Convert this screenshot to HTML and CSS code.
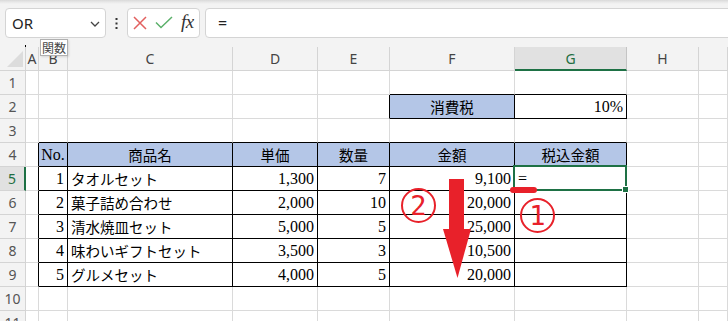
FILE: index.html
```html
<!DOCTYPE html>
<html lang="ja">
<head>
<meta charset="utf-8">
<title>Excel</title>
<link rel="stylesheet" href="styles.css">
</head>
<body>
<div class="app">
  <div class="fbar">
    <div class="namebox">
      <span class="name">OR</span>
      <svg class="chev" width="10" height="6" viewBox="0 0 10 6"><polyline points="1,1 5,5 9,1" fill="none" stroke="#444" stroke-width="1.3"/></svg>
    </div>
    <div class="more">
      <svg width="3" height="11" viewBox="0 0 3 11"><rect x="0.5" y="0" width="2" height="2" fill="#333"/><rect x="0.5" y="4.5" width="2" height="2" fill="#333"/><rect x="0.5" y="9" width="2" height="2" fill="#333"/></svg>
    </div>
    <div class="btns">
      <svg class="cancel" width="14" height="14" viewBox="0 0 14 14"><path d="M1 1 L13 13 M13 1 L1 13" stroke="#e2605f" stroke-width="1.5" fill="none"/></svg>
      <svg class="ok" width="18" height="13" viewBox="0 0 18 13"><polyline points="1,6.5 6,11.5 17,1" stroke="#5bb06a" stroke-width="1.5" fill="none"/></svg>
      <span class="fx">fx</span>
    </div>
    <div class="formula">=</div>
  </div>

  <div class="sheet">
    <div class="row hdr">
      <div class="c corner"><span class="tri"></span></div>
      <div class="c">A</div><div class="c">B</div><div class="c">C</div><div class="c">D</div><div class="c">E</div><div class="c">F</div><div class="c selc">G</div><div class="c">H</div><div class="c"></div>
    </div>
    <div class="row">
      <div class="c rh">1</div>
      <div class="c"></div><div class="c"></div><div class="c"></div><div class="c"></div><div class="c"></div><div class="c kb"></div><div class="c kb"></div><div class="c"></div><div class="c"></div>
    </div>
    <div class="row">
      <div class="c rh">2</div>
      <div class="c"></div><div class="c"></div><div class="c"></div><div class="c"></div><div class="c kr"></div><div class="c t blue j ctr">消費税</div><div class="c t n r">10%</div><div class="c"></div><div class="c"></div>
    </div>
    <div class="row">
      <div class="c rh">3</div>
      <div class="c"></div><div class="c kb"></div><div class="c kb"></div><div class="c kb"></div><div class="c kb"></div><div class="c kb"></div><div class="c kb"></div><div class="c"></div><div class="c"></div>
    </div>
    <div class="row">
      <div class="c rh">4</div>
      <div class="c kr"></div><div class="c t blue n ctr">No.</div><div class="c t blue j ctr">商品名</div><div class="c t blue j ctr">単価</div><div class="c t blue j ctr">数量</div><div class="c t blue j ctr">金額</div><div class="c t blue j ctr">税込金額</div><div class="c"></div><div class="c"></div>
    </div>
    <div class="row">
      <div class="c rh rsel">5</div>
      <div class="c kr"></div><div class="c t n r">1</div><div class="c t j">タオルセット</div><div class="c t n r">1,300</div><div class="c t n r">7</div><div class="c t n r">9,100</div><div class="c t n active">=</div><div class="c"></div><div class="c"></div>
    </div>
    <div class="row">
      <div class="c rh">6</div>
      <div class="c kr"></div><div class="c t n r">2</div><div class="c t j">菓子詰め合わせ</div><div class="c t n r">2,000</div><div class="c t n r">10</div><div class="c t n r">20,000</div><div class="c t"></div><div class="c"></div><div class="c"></div>
    </div>
    <div class="row">
      <div class="c rh">7</div>
      <div class="c kr"></div><div class="c t n r">3</div><div class="c t j">清水焼皿セット</div><div class="c t n r">5,000</div><div class="c t n r">5</div><div class="c t n r">25,000</div><div class="c t"></div><div class="c"></div><div class="c"></div>
    </div>
    <div class="row">
      <div class="c rh">8</div>
      <div class="c kr"></div><div class="c t n r">4</div><div class="c t j">味わいギフトセット</div><div class="c t n r">3,500</div><div class="c t n r">3</div><div class="c t n r">10,500</div><div class="c t"></div><div class="c"></div><div class="c"></div>
    </div>
    <div class="row">
      <div class="c rh">9</div>
      <div class="c kr"></div><div class="c t n r">5</div><div class="c t j">グルメセット</div><div class="c t n r">4,000</div><div class="c t n r">5</div><div class="c t n r">20,000</div><div class="c t"></div><div class="c"></div><div class="c"></div>
    </div>
    <div class="row">
      <div class="c rh">10</div>
      <div class="c"></div><div class="c"></div><div class="c"></div><div class="c"></div><div class="c"></div><div class="c"></div><div class="c"></div><div class="c"></div><div class="c"></div>
    </div>
    <div class="row">
      <div class="c rh">11</div>
      <div class="c"></div><div class="c"></div><div class="c"></div><div class="c"></div><div class="c"></div><div class="c"></div><div class="c"></div><div class="c"></div><div class="c"></div>
    </div>
  </div>

  <div class="tip">関数</div>
  <div class="cursor"></div>

  <svg class="arrow" width="34" height="106" viewBox="0 0 34 106">
    <rect x="9" y="3" width="15" height="51" fill="#e8212a"/>
    <polygon points="3,53 31,53 17.5,102" fill="#e8212a"/>
  </svg>
  <div class="dash"></div>
  <div class="circ c2">2</div>
  <div class="circ c1">1</div>
</div>
</body>
</html>
```

FILE: styles.css
```css
html, body {
  margin: 0;
  padding: 0;
}

body {
  width: 728px;
  height: 321px;
  overflow: hidden;
  background: #ffffff;
  font-family: "Noto Sans", "Open Sans", sans-serif;
}

.app {
  position: relative;
  width: 728px;
  height: 321px;
  overflow: hidden;
  background: #f3f3f3;
}

/* ---------- formula bar ---------- */
.fbar {
  height: 47px;
  box-sizing: border-box;
  padding-top: 8px;
  display: flex;
  align-items: flex-start;
  background: linear-gradient(#d9d9d9 0, #e8e8e8 2px, #f3f3f3 4px);
}

.namebox {
  margin-left: 5px;
  width: 101px;
  height: 30px;
  box-sizing: border-box;
  background: #fff;
  border: 1px solid #d4d4d4;
  border-radius: 4px;
  display: flex;
  align-items: center;
  padding-left: 6px;
  padding-right: 5px;
  font-size: 15px;
  color: #242424;
}

.chev {
  margin-left: auto;
  margin-top: 1px;
}

.more {
  width: 21px;
  height: 30px;
  display: flex;
  align-items: center;
  justify-content: center;
}

.btns {
  width: 73px;
  height: 30px;
  box-sizing: border-box;
  background: #fff;
  border: 1px solid #d4d4d4;
  border-radius: 4px;
  display: flex;
  align-items: center;
  padding-left: 5px;
}

.cancel {
  margin-right: 8px;
}

.ok {
  margin-right: 8px;
  margin-top: -1px;
}

.fx {
  font-family: "Liberation Serif", serif;
  font-style: italic;
  font-size: 19px;
  color: #333;
  letter-spacing: -0.5px;
  margin-top: -2px;
}

.formula {
  margin-left: 5px;
  margin-right: -8px;
  flex: 1;
  height: 30px;
  box-sizing: border-box;
  background: #fff;
  border: 1px solid #d4d4d4;
  border-radius: 4px;
  display: flex;
  align-items: center;
  padding-left: 12px;
  font-size: 16px;
  color: #222;
}

/* ---------- sheet ---------- */
.sheet {
  background: #ffffff;
}

.row {
  display: grid;
  grid-template-columns: 26px 13px 29px 165px 85px 72px 125px 112px 72px 1fr;
  height: 24px;
}

.c {
  box-sizing: border-box;
  position: relative;
  height: 24px;
  border-right: 1px solid #dadada;
  border-bottom: 1px solid #dadada;
  display: flex;
  align-items: flex-end;
  padding: 0 3px 2px 3px;
  white-space: nowrap;
  color: #000;
}

.hdr .c {
  background: #f3f3f3;
  border-color: #d4d4d4;
  align-items: center;
  justify-content: center;
  padding: 0;
  font-size: 14px;
  color: #444;
}

.hdr .selc {
  background: #e1e1e1;
  border-right-color: #c4c4c4;
  border-bottom: 2px solid #1e7145;
  color: #1e6e42;
}

.corner {
  justify-content: flex-end !important;
  align-items: flex-end !important;
  padding: 0 2px 3px 0 !important;
}

.tri {
  width: 0;
  height: 0;
  border-left: 16px solid transparent;
  border-bottom: 16px solid #dcdcdc;
}

.rh {
  background: #f3f3f3;
  border-color: #d4d4d4;
  align-items: center;
  justify-content: center;
  padding: 0;
  font-size: 14px;
  color: #555;
}

.rsel {
  background: #e1e1e1;
  border-right: 2px solid #1e7145;
  color: #1e6e42;
}

.kr {
  border-right-color: #000;
}

.kb {
  border-bottom-color: #000;
}

.t {
  border-right-color: #000;
  border-bottom-color: #000;
}

.blue {
  background: #b4c6e7;
}

.n {
  font-family: "Liberation Serif", serif;
  font-size: 16px;
  line-height: 18px;
}

.j {
  font-family: "Noto Sans CJK JP", sans-serif;
  font-size: 14.5px;
  line-height: 18px;
}

.r {
  justify-content: flex-end;
}

.ctr {
  justify-content: center;
}

.active::after {
  content: "";
  position: absolute;
  top: -2px;
  left: -2px;
  right: -1px;
  bottom: -1px;
  border: 2px solid #1e7145;
  pointer-events: none;
}

.active::before {
  content: "";
  position: absolute;
  right: -3px;
  bottom: -3px;
  width: 5px;
  height: 5px;
  background: #1e7145;
  border: 1px solid #fff;
  z-index: 2;
}

/* ---------- overlays ---------- */
.tip {
  position: absolute;
  left: 40px;
  top: 39px;
  width: 28px;
  height: 17px;
  box-sizing: border-box;
  border: 1px solid #b0b0b0;
  background: #fff;
  box-shadow: 1px 1px 2px rgba(0, 0, 0, 0.12);
  font-family: "Noto Sans CJK JP", sans-serif;
  font-size: 12px;
  line-height: 15px;
  color: #444;
  text-align: center;
}

.cursor {
  position: absolute;
  left: 25px;
  top: 45px;
  width: 1px;
  height: 2px;
  background: #000;
}

.arrow {
  position: absolute;
  left: 440px;
  top: 176px;
}

.dash {
  position: absolute;
  left: 510px;
  top: 187px;
  width: 27px;
  height: 6px;
  border-radius: 3px;
  background: #e8212a;
}

.circ {
  position: absolute;
  width: 35px;
  height: 35px;
  box-sizing: border-box;
  border: 2px solid #e8212a;
  border-radius: 50%;
  display: flex;
  align-items: center;
  justify-content: center;
  font-family: "DejaVu Sans Mono", monospace;
  font-size: 27px;
  color: #e8212a;
  line-height: 1;
}

.c2 {
  left: 401px;
  top: 188px;
}

.c1 {
  left: 520px;
  top: 198px;
}
```
